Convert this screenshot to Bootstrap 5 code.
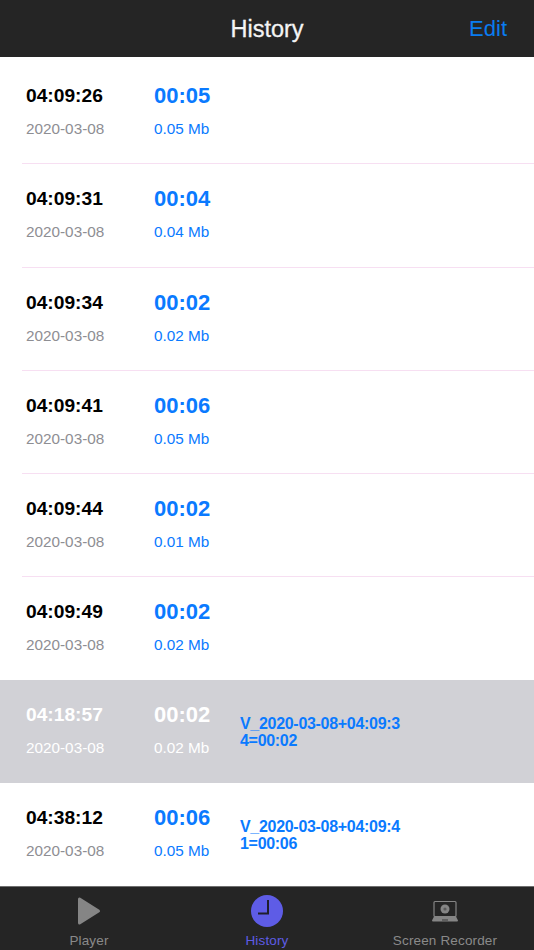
<!DOCTYPE html>
<html lang="en">
<head>
<meta charset="utf-8">
<title>History</title>
<link href="https://cdn.jsdelivr.net/npm/bootstrap@5.3.0/dist/css/bootstrap.min.css" rel="stylesheet">
<style>
html,body{height:100%;}
body{font-family:"Liberation Sans",Arial,sans-serif;background:#fff;overflow:hidden;}
.app-shell{height:950px;}
.top-bar{height:57px;background:#252525;padding:2px 0 0;flex:none;}
.top-title{font-size:23.5px;font-weight:400;color:#f4f4f4;-webkit-text-stroke:.3px #f4f4f4;}
.top-edit{right:27px;top:14px;font-size:22px;line-height:30px;color:#0a7cf0;text-decoration:none;}
.rec-list{padding-top:3.6px;min-height:0;}
.rec-item{height:103.2px;padding:0 0 1px;border:0;background:transparent;position:relative;}
.rec-item:not(.no-rule)::after{content:"";position:absolute;left:22px;right:0;bottom:-.6px;height:1px;background:#f7dff2;}
.rec-item.is-selected{background:#d1d1d6;}
.col-time{width:154px;padding-left:26px;flex:none;}
.col-len{width:86px;flex:none;}
.col-name{width:162px;flex:none;font-size:16px;letter-spacing:-.3px;font-weight:700;line-height:17.5px;color:#0a7aff;word-break:break-all;margin-top:3px;}
.t-main{font-size:19.2px;font-weight:700;line-height:22px;color:#000;}
.t-len{font-size:22px;font-weight:700;line-height:22px;color:#0a7aff;}
.t-date{font-size:15.3px;line-height:18px;margin-top:13px;color:#8e8e93;}
.t-size{font-size:15.3px;line-height:18px;margin-top:13px;color:#0a7aff;}
.is-selected .t-main,.is-selected .t-len,.is-selected .t-date,.is-selected .t-size{color:#fff;}
.tab-strip{height:64px;background:#252525;border-top:1px solid #6f6f6f;flex:none;}
.tab-cell{width:178px;color:#8a8a8a;text-decoration:none;font-size:13.5px;line-height:16px;letter-spacing:.15px;padding-top:7px;}
.tab-cell svg{display:block;height:34px;margin-bottom:5px;}
.tab-cell.is-active{color:#5e5ce6;}
</style>
</head>
<body>
<div class="app-shell d-flex flex-column">
  <nav class="navbar top-bar justify-content-center position-relative">
    <span class="top-title">History</span>
    <a class="top-edit position-absolute" href="#">Edit</a>
  </nav>
  <div class="list-group list-group-flush rec-list flex-grow-1">
    <div class="list-group-item rec-item d-flex align-items-center"><div class="col-time"><div class="t-main">04:09:26</div><div class="t-date">2020-03-08</div></div><div class="col-len"><div class="t-len">00:05</div><div class="t-size">0.05 Mb</div></div></div>
    <div class="list-group-item rec-item d-flex align-items-center"><div class="col-time"><div class="t-main">04:09:31</div><div class="t-date">2020-03-08</div></div><div class="col-len"><div class="t-len">00:04</div><div class="t-size">0.04 Mb</div></div></div>
    <div class="list-group-item rec-item d-flex align-items-center"><div class="col-time"><div class="t-main">04:09:34</div><div class="t-date">2020-03-08</div></div><div class="col-len"><div class="t-len">00:02</div><div class="t-size">0.02 Mb</div></div></div>
    <div class="list-group-item rec-item d-flex align-items-center"><div class="col-time"><div class="t-main">04:09:41</div><div class="t-date">2020-03-08</div></div><div class="col-len"><div class="t-len">00:06</div><div class="t-size">0.05 Mb</div></div></div>
    <div class="list-group-item rec-item d-flex align-items-center"><div class="col-time"><div class="t-main">04:09:44</div><div class="t-date">2020-03-08</div></div><div class="col-len"><div class="t-len">00:02</div><div class="t-size">0.01 Mb</div></div></div>
    <div class="list-group-item rec-item no-rule d-flex align-items-center"><div class="col-time"><div class="t-main">04:09:49</div><div class="t-date">2020-03-08</div></div><div class="col-len"><div class="t-len">00:02</div><div class="t-size">0.02 Mb</div></div></div>
    <div class="list-group-item rec-item no-rule is-selected d-flex align-items-center"><div class="col-time"><div class="t-main">04:18:57</div><div class="t-date">2020-03-08</div></div><div class="col-len"><div class="t-len">00:02</div><div class="t-size">0.02 Mb</div></div><div class="col-name">V_2020-03-08+04:09:34=00:02</div></div>
    <div class="list-group-item rec-item no-rule d-flex align-items-center"><div class="col-time"><div class="t-main">04:38:12</div><div class="t-date">2020-03-08</div></div><div class="col-len"><div class="t-len">00:06</div><div class="t-size">0.05 Mb</div></div><div class="col-name">V_2020-03-08+04:09:41=00:06</div></div>
  </div>
  <nav class="nav tab-strip flex-nowrap">
    <a class="tab-cell d-flex flex-column align-items-center" href="#">
      <svg width="34" height="34" viewBox="0 0 34 34"><path d="M7.500 5 L7.500 29 L26.500 17Z" fill="#858585" stroke="#858585" stroke-width="3" stroke-linejoin="round"/></svg>
      <span>Player</span>
    </a>
    <a class="tab-cell is-active d-flex flex-column align-items-center" href="#">
      <svg width="34" height="34" viewBox="0 0 34 34"><circle cx="17" cy="17" r="16" fill="#5e5ce6"/><path d="M18 6 V19.500 H8" fill="none" stroke="#1f1f2a" stroke-width="2"/></svg>
      <span>History</span>
    </a>
    <a class="tab-cell d-flex flex-column align-items-center" href="#">
      <svg width="34" height="34" viewBox="0 0 34 34"><rect x="6" y="7.500" width="22" height="15" rx="1" fill="none" stroke="#858585" stroke-width="1.200"/><circle cx="17" cy="15" r="4.500" fill="#858585"/><circle cx="17" cy="15" r="1.600" fill="#5a5a5a"/><path d="M6 22.500 H28 L30 26.500 Q30 27.500 29 27.500 H5 Q4 27.500 4 26.500Z" fill="#858585"/><rect x="14" y="25.500" width="6" height="1" fill="#3a3a3a"/></svg>
      <span>Screen Recorder</span>
    </a>
  </nav>
</div>
<script src="https://cdn.jsdelivr.net/npm/bootstrap@5.3.0/dist/js/bootstrap.bundle.min.js"></script>
</body>
</html>
